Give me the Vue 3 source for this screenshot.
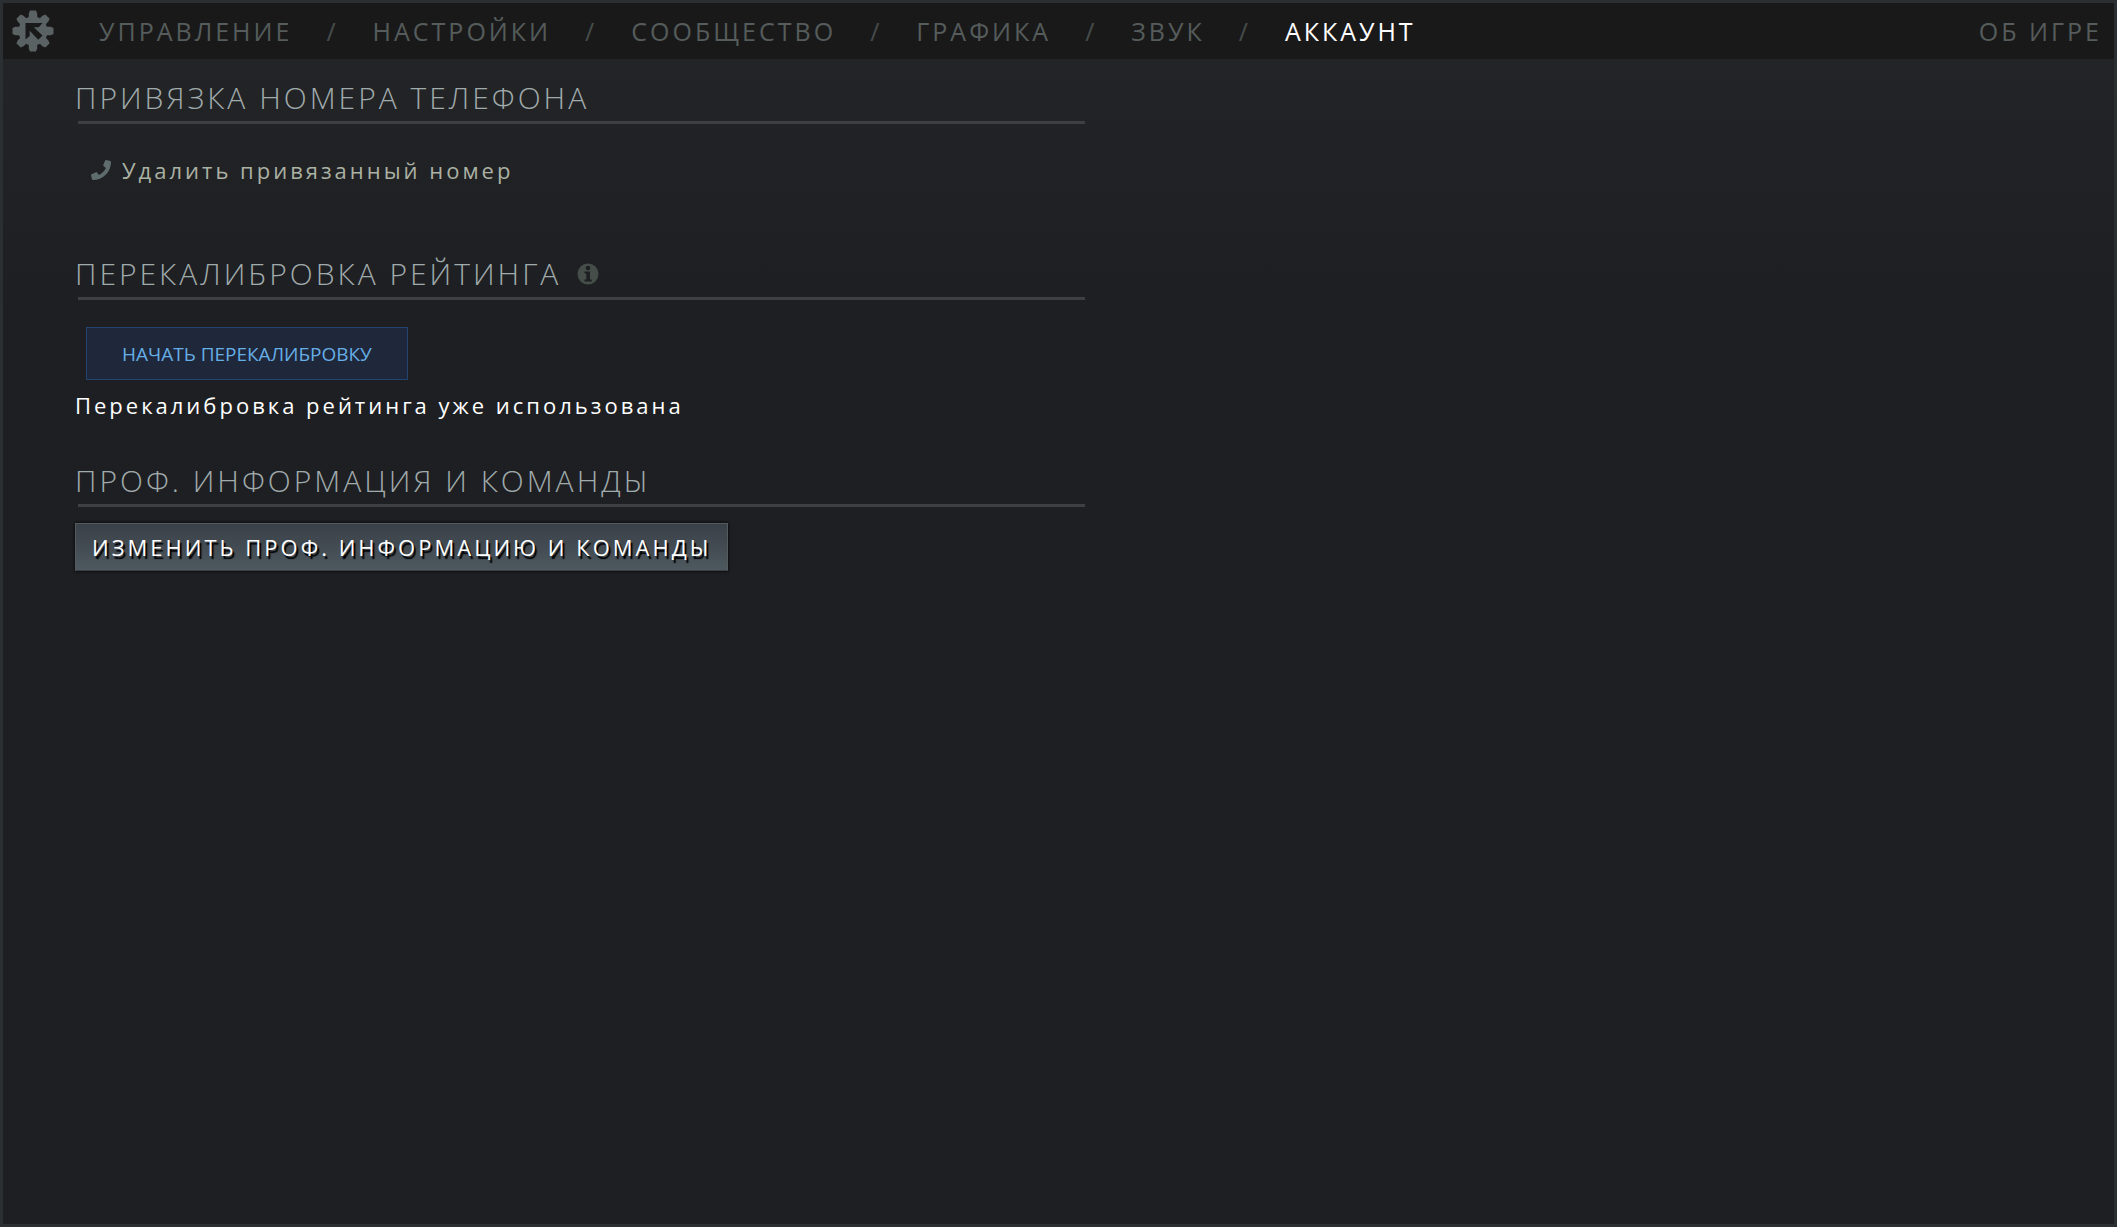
<script setup>
import { ref } from 'vue'

const tabs = ['Управление', 'Настройки', 'Сообщество', 'Графика', 'Звук', 'Аккаунт']
const activeTab = ref('Аккаунт')
</script>

<template>
  <div class="settings">
    <header class="topbar">
      <button class="gear-btn" aria-label="Настройки">
        <svg viewBox="0 0 42 42" width="42" height="42">
          <g fill="#5a6263">
            <circle cx="21" cy="21" r="14.500" />
            <path
              v-for="angle in [0, 45, 90, 135, 180, 225, 270, 315]"
              :key="angle"
              :transform="`rotate(${angle} 21 21)`"
              d="M18 .5h6l1.200 3v5h-8.400v-5z"
            />
          </g>
          <path d="M13.500 13h17l-3.700 4.200h-5l8.700 8.300-4.200 4.200-8.600-8.900v5.200l-4.200 3.500z" fill="#19191a" />
        </svg>
      </button>

      <nav class="tabs">
        <template v-for="(tab, i) in tabs" :key="tab">
          <span v-if="i > 0" class="tab-divider">/</span>
          <a href="#" class="tab" :class="{ active: tab === activeTab }" @click.prevent="activeTab = tab">{{ tab }}</a>
        </template>
      </nav>

      <a href="#" class="about" @click.prevent>Об игре</a>
    </header>

    <main class="content">
      <section class="section phone">
        <h2 class="section-title">Привязка номера телефона</h2>
        <a href="#" class="phone-link" @click.prevent>
          <svg viewBox="0 0 512 512" width="20" height="20" fill="#5e6c6e">
            <path d="M493.400 24.600l-104-24c-11.300-2.600-22.900 3.300-27.500 13.900l-48 112c-4.200 9.800-1.400 21.300 6.900 28l60.600 49.600c-36 76.700-98.900 140.500-177.200 177.200l-49.600-60.600c-6.800-8.300-18.200-11.100-28-6.900l-112 48C3.900 366.500-2 378.100.6 389.400l24 104C27.100 504.200 36.700 512 48 512c256.100 0 464-207.500 464-464 0-11.200-7.700-20.900-18.600-23.400z" />
          </svg>
          Удалить привязанный номер
        </a>
      </section>

      <section class="section rating">
        <h2 class="section-title">
          Перекалибровка рейтинга
          <svg class="info" viewBox="0 0 22 22" width="22" height="22">
            <circle cx="11" cy="11" r="10.500" fill="#454e49" />
            <circle cx="11" cy="5" r="2.300" fill="#1e1f22" />
            <path d="M7.500 8.500h5.500v8h1.800v2H7.500v-2h1.800v-6H7.500z" fill="#1e1f22" />
          </svg>
        </h2>
        <button class="recalibrate-btn">Начать перекалибровку</button>
        <p class="note">Перекалибровка рейтинга уже использована</p>
      </section>

      <section class="section">
        <h2 class="section-title">Проф. информация и команды</h2>
        <button class="edit-btn">Изменить проф. информацию и команды</button>
      </section>
    </main>
  </div>
</template>

<style>
body {
  background: #1e1f22;
}
</style>

<style scoped>
.settings {
  box-sizing: border-box;
  min-height: 100vh;
  border: 3px solid #2b2f31;
  background: linear-gradient(#242527, #1e1f22 300px);
  font-family: 'Open Sans', 'Noto Sans', sans-serif;
  color: #fff;
}

.topbar {
  display: flex;
  align-items: center;
  height: 56px;
  padding: 0 12px 0 9px;
  background: #19191a;
  font-size: 25px;
  line-height: 32px;
  letter-spacing: 3px;
  text-transform: uppercase;
}

.gear-btn {
  width: 42px;
  height: 42px;
  padding: 0;
  border: none;
  background: none;
  cursor: pointer;
}

.gear-btn svg {
  display: block;
}

.tabs {
  display: flex;
  margin-left: 45px;
}

.tab,
.about {
  color: #555c5b;
  text-decoration: none;
}

.tab:hover,
.tab.active {
  color: #fff;
}

.tab-divider {
  margin: 0 34px;
  color: #464c4b;
}

.about {
  margin-left: auto;
}

.content {
  max-width: 1010px;
  padding: 21px 72px;
}

.section {
  display: flex;
  flex-direction: column;
  align-items: flex-start;
}

.section-title {
  display: flex;
  flex-wrap: wrap;
  align-items: center;
  width: 100%;
  margin: 0;
  font-size: 30px;
  font-weight: 300;
  line-height: 36px;
  letter-spacing: 3px;
  text-transform: uppercase;
  color: #a0abac;
}

.section-title::after {
  content: '';
  width: 100%;
  height: 3px;
  margin: 5px 0 0 3px;
  background: #3d3f42;
}

.info {
  margin-left: 16px;
}

.phone {
  margin-bottom: 71px;
}

.phone-link {
  display: flex;
  align-items: center;
  gap: 11px;
  margin: 31px 0 0 16px;
  font-size: 22px;
  line-height: 30px;
  letter-spacing: 3px;
  color: #abb1a3;
  text-decoration: none;
}

.rating {
  margin-bottom: 43px;
}

.recalibrate-btn {
  height: 53px;
  margin: 27px 0 0 11px;
  padding: 0 35px;
  border: 1px solid #254370;
  background: #1f273b;
  font-family: inherit;
  font-size: 19px;
  color: #66aee6;
  text-transform: uppercase;
  cursor: pointer;
}

.recalibrate-btn:hover {
  background: #26314b;
}

.note {
  margin: 10px 0 0;
  font-size: 22px;
  line-height: 30px;
  letter-spacing: 3px;
}

.edit-btn {
  height: 48px;
  margin-top: 16px;
  padding: 0 16px;
  border: 1px solid #555a5c;
  border-bottom-color: #3a4043;
  background: linear-gradient(#3a4047, #4d585f);
  box-shadow: 0 0 3px #000;
  font-family: inherit;
  font-size: 22px;
  letter-spacing: 3px;
  color: #fff;
  text-shadow: 2px 3px 1px #000;
  text-transform: uppercase;
  cursor: pointer;
}

.edit-btn:hover {
  background: linear-gradient(#444b53, #5a666e);
}
</style>
